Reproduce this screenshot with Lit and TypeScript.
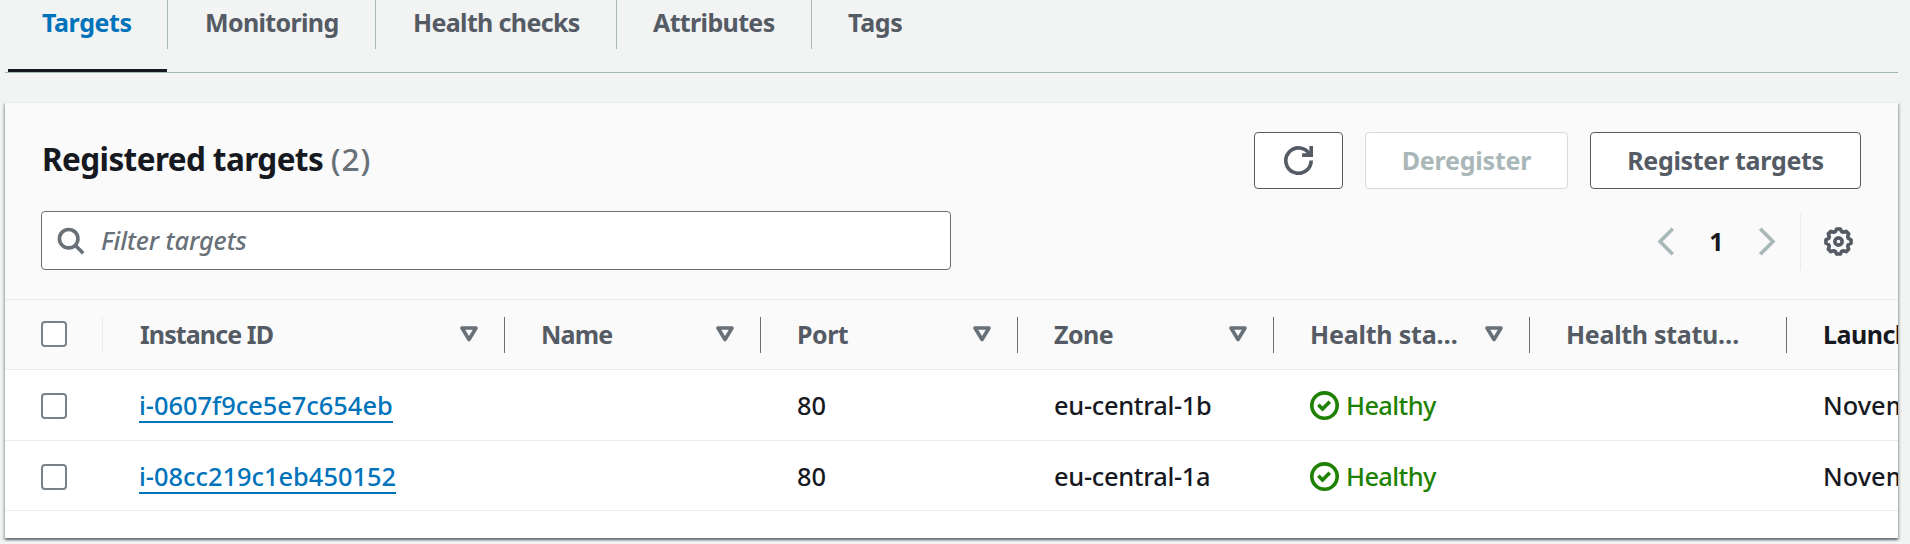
import { LitElement, html, css, svg, nothing } from "lit";
import { customElement } from "lit/decorators.js";
import { classMap } from "lit/directives/class-map.js";

const gearPath = (() => {
  const pts: string[] = [];
  const n = 8;
  const point = (r: number, deg: number) => {
    const a = (deg * Math.PI) / 180;
    return `${(8 + r * Math.sin(a)).toFixed(2)} ${(8 - r * Math.cos(a)).toFixed(2)}`;
  };
  for (let i = 0; i < n; i++) {
    const c = (i * 360) / n;
    pts.push(point(5.7, c - 18), point(7, c - 8), point(7, c + 8), point(5.7, c + 18));
  }
  return `M${pts.join("L")}Z`;
})();

const icons = {
  refresh: svg`<path d="M10 5h5V0"/><path d="M15 8a7 7 0 1 1-.7-3"/>`,
  search: svg`<circle cx="7" cy="7" r="5.1"/><path d="m15 15-4.4-4.4"/>`,
  prev: svg`<path d="M12 1 5 8l7 7"/>`,
  next: svg`<path d="m4 1 7 7-7 7"/>`,
  settings: svg`<path stroke-linejoin="round" d=${gearPath}/><circle cx="8" cy="8" r="2"/>`,
  positive: svg`<circle cx="8" cy="8" r="7"/><path d="m4.6 7.6 2.3 2.3 4-4"/>`,
};

const icon = (name: keyof typeof icons) => html`
  <svg class="icon" viewBox="0 0 16 16" aria-hidden="true">${icons[name]}</svg>
`;

const tabs = [
  { label: "Targets", cls: "t-targets" },
  { label: "Monitoring", cls: "t-monitoring" },
  { label: "Health checks", cls: "t-health" },
  { label: "Attributes", cls: "t-attributes" },
  { label: "Tags", cls: "t-tags" },
];

const columns = [
  { label: "Instance ID", sort: true, cls: "c-id" },
  { label: "Name", sort: true, cls: "c-name" },
  { label: "Port", sort: true, cls: "c-port" },
  { label: "Zone", sort: true, cls: "c-zone" },
  { label: "Health sta…", sort: true, cls: "c-hs" },
  { label: "Health statu…", sort: false, cls: "c-hd" },
  { label: "Launch time", sort: false, cls: "c-launch" },
];

const targets = [
  { id: "i-0607f9ce5e7c654eb", name: "", port: 80, zone: "eu-central-1b", launch: "November" },
  { id: "i-08cc219c1eb450152", name: "", port: 80, zone: "eu-central-1a", launch: "November" },
];

@customElement("app-root")
export class AppRoot extends LitElement {
  static styles = css`
    :host {
      display: block;
      box-sizing: border-box;
      height: 544px;
      overflow: hidden;
      padding: 0 12px 0 5px;
      background: #f2f3f3;
      color: #16191f;
      font: 500 25.4px/36px "Noto Sans", sans-serif;
      white-space: nowrap;
    }
    * { box-sizing: border-box; }
    .icon {
      display: block;
      flex: none;
      width: 29px;
      height: 29px;
      fill: none;
      stroke: currentColor;
      stroke-width: 2;
    }

    .tabs {
      display: grid;
      grid-template-columns: 163px 208px 241px 195px 1fr;
      height: 73px;
      border-bottom: 1px solid #a3b5b5;
      color: #545b64;
      font-size: 25px;
      font-weight: 700;
    }
    .tab { display: flex; flex-direction: column; justify-content: space-between; }
    .label { height: 49px; padding: 4px 0 0 37px; border-right: 1px solid #aab7b8; }
    .tab:last-child .label { border-right: 0; }
    .tab.active { color: #0073bb; }
    .tab.active::after { content: ""; height: 3px; margin: 0 1px 0 3px; background: #16191f; }
    .t-targets { letter-spacing: -0.4px; }
    .t-monitoring { letter-spacing: -0.65px; }
    .t-health { letter-spacing: -0.65px; }
    .t-attributes { letter-spacing: -0.65px; }
    .t-attributes .label { padding-left: 36px; }
    .t-tags { letter-spacing: -0.3px; }
    .t-tags .label { padding-left: 36px; }

    .card {
      height: 436px;
      margin-top: 29px;
      border-top: 1px solid #e6ecec;
      background: #fff;
      box-shadow: 0 2px 2px rgba(0, 28, 36, 0.45), 2px 2px 2px rgba(0, 28, 36, 0.15),
        -2px 2px 2px rgba(0, 28, 36, 0.15);
    }
    .head {
      display: flex;
      flex-direction: column;
      gap: 22px;
      height: 197px;
      padding: 29px 37px 0 36px;
      background: #fafafa;
      border-bottom: 1px solid #eaeded;
    }
    .bar { display: flex; align-items: center; justify-content: space-between; }
    .title {
      margin: 0;
      padding: 0 0 3px 1px;
      font-size: 31.5px;
      font-weight: 700;
      letter-spacing: -0.6px;
    }
    .count { font-weight: 500; color: #687078; letter-spacing: 0.9px; }
    .actions { display: flex; gap: 22px; }
    .button {
      display: flex;
      align-items: center;
      justify-content: center;
      height: 57px;
      padding: 0 0 1px;
      border: 1px solid #545b64;
      border-radius: 4px;
      background: #fff;
      color: #545b64;
      font: inherit;
      font-size: 25px;
      font-weight: 700;
    }
    .refresh { width: 89px; padding: 0; }
    .deregister { width: 203px; border-color: #d5dbdb; color: #aab7b8; letter-spacing: -0.2px; }
    .register { width: 271px; letter-spacing: -0.3px; }

    .filter {
      display: flex;
      align-items: center;
      gap: 16px;
      width: 910px;
      height: 59px;
      padding: 0 0 1px 14px;
      border: 1px solid #687078;
      border-radius: 4px;
      background: #fff;
      color: #687078;
      font-style: italic;
      letter-spacing: -0.1px;
    }
    .pager { display: flex; align-items: center; padding-top: 1px; color: #aab7b8; }
    .page { width: 73px; text-align: center; color: #16191f; font-weight: 700; font-size: 25px; }
    .settings {
      display: flex;
      align-items: center;
      height: 57px;
      margin-left: 18px;
      padding: 0 8px 0 23px;
      border-left: 1px solid #eaeded;
      color: #545b64;
    }

    .table { overflow: hidden; }
    .row {
      display: grid;
      grid-template-columns: 98px 402px 256px 257px 256px 256px 257px 1fr;
      align-items: center;
      height: 71px;
      padding-top: 1px;
      border-bottom: 1px solid #eaeded;
      line-height: 34px;
    }
    .row:last-child { height: 70px; padding-top: 2px; }
    .row.header {
      height: 70px;
      padding-top: 0;
      background: #fafafa;
      color: #545b64;
      font-size: 25px;
      font-weight: 700;
      line-height: 36px;
    }
    .cell { display: flex; align-items: center; min-width: 0; padding: 0 0 2px 36px; }
    .cell.pick { padding-bottom: 0; }
    .header .cell {
      height: 36px;
      padding: 0 26px 2px 36px;
      border-right: 1px solid #687078;
    }
    .header .cell.pick { border-right-color: #eaeded; }
    .header .cell:last-child { border-right: 0; color: #16191f; }
    .box {
      flex: none;
      width: 26px;
      height: 26px;
      border: 2px solid #7a8289;
      border-radius: 4px;
      background: #fff;
    }
    .sort {
      flex: none;
      width: 18px;
      height: 16px;
      margin: 0 0 0 auto;
      fill: none;
      stroke: #687078;
      stroke-width: 3.6;
      stroke-linejoin: round;
    }
    .c-id { padding-left: 1px; letter-spacing: -0.9px; }
    .c-name { letter-spacing: -0.8px; }
    .c-port, .c-zone { letter-spacing: -0.5px; }
    .c-hs { letter-spacing: -0.2px; }
    .c-hd { letter-spacing: -0.3px; }
    .c-launch { letter-spacing: -0.5px; }

    .link {
      height: 36px;
      border-bottom: 2px solid #0073bb;
      color: #0073bb;
      line-height: 36px;
    }
    .zone { letter-spacing: -0.3px; }
    .status { gap: 7px; padding-bottom: 0; color: #1d8102; letter-spacing: -0.6px; }
    .status span { padding-bottom: 2px; }
  `;

  render() {
    return html`
      <nav class="tabs">
        ${tabs.map((t, i) => html`
          <div class=${classMap({ tab: true, active: i === 0, [t.cls]: true })}>
            <div class="label">${t.label}</div>
          </div>`)}
      </nav>
      <section class="card">
        <header class="head">
          <div class="bar">
            <h2 class="title">Registered targets <span class="count">(2)</span></h2>
            <div class="actions">
              <button class="button refresh" aria-label="Refresh">${icon("refresh")}</button>
              <button class="button deregister">Deregister</button>
              <button class="button register">Register targets</button>
            </div>
          </div>
          <div class="bar">
            <div class="filter">${icon("search")}<span>Filter targets</span></div>
            <div class="pager">
              ${icon("prev")}<span class="page">1</span>${icon("next")}
              <div class="settings">${icon("settings")}</div>
            </div>
          </div>
        </header>
        <div class="table">
          <div class="row header">
            <div class="cell pick"><span class="box"></span></div>
            ${columns.map((c) => html`
              <div class="cell">
                <span class=${c.cls}>${c.label}</span>
                ${c.sort
                  ? html`<svg class="sort" viewBox="0 0 18 16"><path d="M2 2h14L9 13.5Z" /></svg>`
                  : nothing}
              </div>`)}
          </div>
          ${targets.map((t) => html`
            <div class="row">
              <div class="cell pick"><span class="box"></span></div>
              <div class="cell"><a class="link">${t.id}</a></div>
              <div class="cell">${t.name}</div>
              <div class="cell">${t.port}</div>
              <div class="cell zone">${t.zone}</div>
              <div class="cell status">${icon("positive")}<span>Healthy</span></div>
              <div class="cell"></div>
              <div class="cell">${t.launch}</div>
            </div>`)}
        </div>
      </section>
    `;
  }
}
